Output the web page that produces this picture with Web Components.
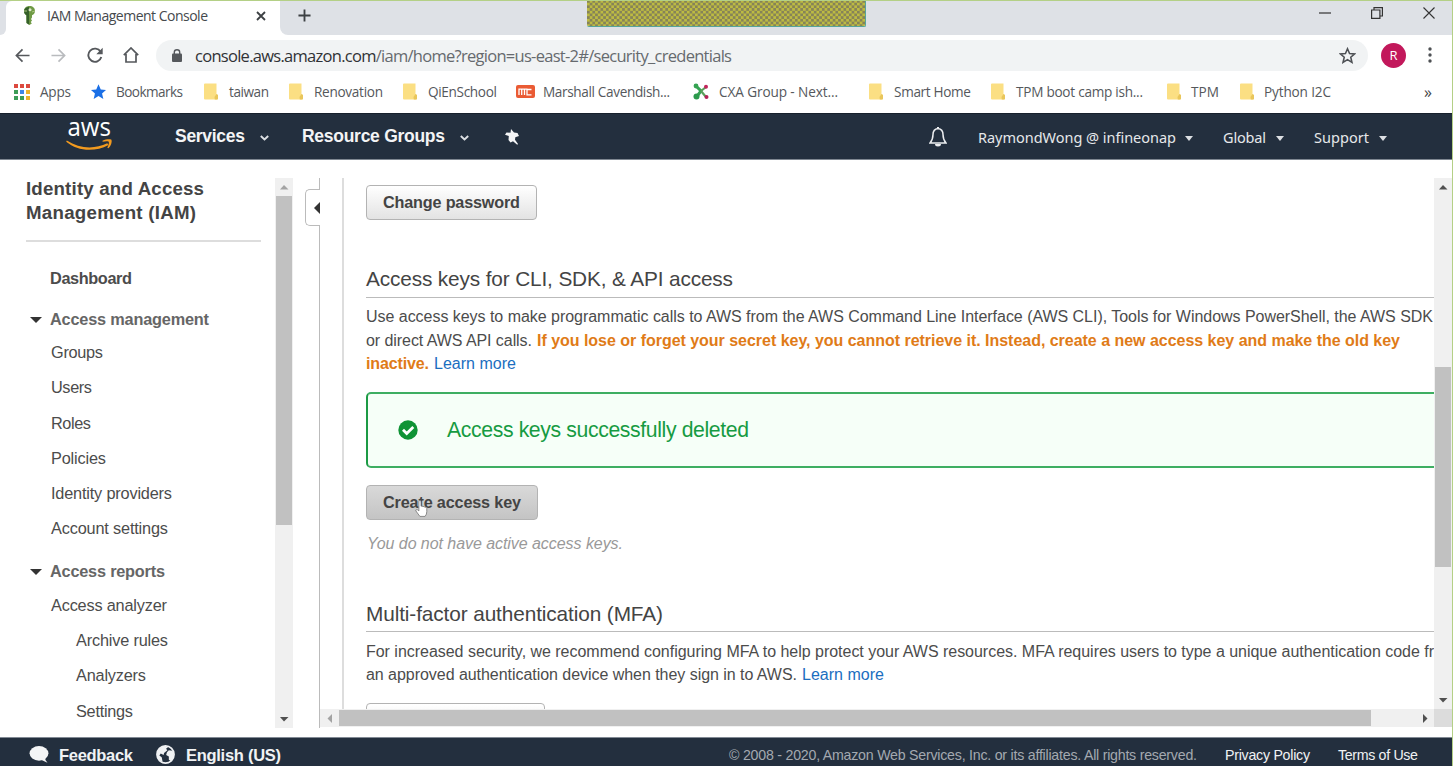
<!DOCTYPE html>
<html lang="en">
<head>
<meta charset="utf-8">
<title>IAM Management Console</title>
<style>
html,body{margin:0;height:100%;overflow:hidden;background:#fff}
body{font-family:"Liberation Sans",Arial,sans-serif}
</style>
</head>
<body>
<iam-window></iam-window>
<script>
const icons = {
  key:'<svg viewBox="0 0 13 19"><path d="M6.500 0C3 0 1 2.200 1 5c0 2 1 3.300 2.300 4.200L3.500 17l3 2 2.300-1.500-1-1.500 1.200-1.500-1-1.500 1-1.500L9 9.200C11 8.300 12 6.800 12 5c0-3-2.200-5-5.500-5z" fill="#6f9a45"/><path d="M6 1C3 1 1 3 1 5.200 1 7 2 8.600 3.500 9.200V17l2.700 1.800z" fill="#35602a"/><circle cx="7" cy="3.700" r="1.500" fill="#dfe8cf"/><path d="M1 5h3M9 6l3-1" stroke="#a8c47e"/></svg>',
  close:'<svg viewBox="0 0 10 10"><path d="M1 1l8 8M9 1L1 9" stroke="#3c4043" stroke-width="1.800"/></svg>',
  plus:'<svg viewBox="0 0 14 14"><path d="M7 .5v13M.5 7h13" stroke="#3c4043" stroke-width="2"/></svg>',
  min:'<svg viewBox="0 0 12 12"><path d="M0 6h12" stroke="#333" stroke-width="1.200"/></svg>',
  restore:'<svg viewBox="0 0 12 12"><path d="M.6 3h8.300v8.400H.6zM3 3V.7h8.400V9H9" fill="none" stroke="#333" stroke-width="1.200"/></svg>',
  x:'<svg viewBox="0 0 12 12"><path d="M.5.5l11 11M11.500.5l-11 11" stroke="#333" stroke-width="1.100"/></svg>',
  back:'<svg viewBox="0 0 16 16"><path d="M15.500 8H1.500M8 1.500L1.500 8 8 14.500" fill="none" stroke="#55585c" stroke-width="1.800"/></svg>',
  fwd:'<svg viewBox="0 0 16 16"><path d="M.5 8h14M8 1.500L14.500 8 8 14.500" fill="none" stroke="#b9bbbe" stroke-width="1.800"/></svg>',
  reload:'<svg viewBox="0 0 16 16"><path d="M13.600 4.800A6.600 6.600 0 1 0 14.300 10" fill="none" stroke="#55585c" stroke-width="1.900"/><path d="M15.700.8v6.400H9.300z" fill="#55585c"/></svg>',
  home:'<svg viewBox="0 0 16 16"><path d="M.8 8.200L8 1l7.200 7.200M3 7v8h10V7" fill="none" stroke="#55585c" stroke-width="1.700"/></svg>',
  lock:'<svg viewBox="0 0 10 13"><rect y="4.500" width="10" height="8.500" rx="1" fill="#55585c"/><path d="M2.300 5V3.200a2.700 2.400 0 0 1 5.400 0V5" fill="none" stroke="#55585c" stroke-width="1.400"/></svg>',
  star:'<svg viewBox="0 0 24 24"><path d="M12 2.500l2.900 6.700 7.200.6-5.500 4.700 1.700 7.100L12 17.800l-6.300 3.800 1.700-7.100L1.900 9.800l7.200-.6z" fill="none" stroke="#4d5054" stroke-width="2.200"/></svg>',
  dots:'<svg viewBox="0 0 4 16"><circle cx="2" cy="2" r="1.700" fill="#4d5054"/><circle cx="2" cy="8" r="1.700" fill="#4d5054"/><circle cx="2" cy="14" r="1.700" fill="#4d5054"/></svg>',
  apps:'<svg viewBox="0 0 16 16"><path d="M0 0h4v4H0zM6 0h4v4H6zM12 0h4v4h-4z" fill="#dc4a3f"/><path d="M0 6h4v4H0zM0 12h4v4H0z" fill="#3c9c56"/><path d="M6 6h4v4H6z" fill="#3f86e8"/><path d="M12 6h4v4h-4zM12 12h4v4h-4z" fill="#eeb32b"/><path d="M6 12h4v4H6z" fill="#3c9c56"/></svg>',
  bstar:'<svg viewBox="1 1 22 21"><path d="M12 1l3.300 7.500 8 .7-6.100 5.300 1.900 7.900L12 18.200l-7.100 4.200 1.900-7.900L.7 9.200l8-.7z" fill="#1a6fe6"/></svg>',
  folder:'<svg viewBox="0 0 14 17"><path d="M0 1.500Q0 .5 1 .5h11.500v10.700l1.500.8v3.500q0 1-1 1H1q-1 0-1-1z" fill="#fbdf83"/><path d="M12.500 11l-2 3 .3 2.500H13q1 0 1-1V12z" fill="#e9c65b"/></svg>',
  mc:'<svg viewBox="0 0 19 13"><rect width="19" height="13" rx="2" fill="#ea5b34"/><path d="M3 10V4.200h5.500V10M5.700 4.500V10M15.500 4.500H11v5.300h4.500M8.500 4.200h3" fill="none" stroke="#fff" stroke-width="1.300"/></svg>',
  cxa:'<svg viewBox="0 0 16 17"><path d="M2.500 2.500L8 8l-4.500 6" fill="none" stroke="#35a352" stroke-width="3"/><path d="M8 8l5-4M8 8l5 6" stroke="#5a9f5c" stroke-width="2.200"/><circle cx="3" cy="3" r="2.400" fill="#35a352"/><circle cx="3.500" cy="13.500" r="3" fill="#2c9a4d"/><circle cx="13" cy="3.700" r="2" fill="#c2265c"/><circle cx="13.500" cy="14" r="2" fill="#b42058"/></svg>',
  chev:'<svg viewBox="0 0 9 6"><path d="M.8 1l3.700 3.500L8.200 1" fill="none" stroke="#dcdfe3" stroke-width="1.900"/></svg>',
  caret:'<svg viewBox="0 0 8 5"><path d="M0 0h8L4 5z" fill="#dcdfe3"/></svg>',
  pin:'<svg viewBox="0 0 14 16"><path d="M6 0l3 3.500 3.500.5 1.500 3-3.700 1.200-.3 2.600L13 15l-.8.8L8 12.200l-2.500 1.300-2-2.500L3.800 7 0 5.800 1.500 3.500l4 .2z" fill="#f4f5f6"/></svg>',
  bell:'<svg viewBox="0 0 18 20"><path d="M9 1.500C5.700 2 4 4.200 4 7.500c0 4-.8 6-3 8.500h16c-2.200-2.500-3-4.500-3-8.500 0-3.300-1.700-5.500-5-6z" fill="none" stroke="#eceef0" stroke-width="1.500"/><path d="M8 0h2v2H8zM6 17h6a3 2.500 0 0 1-6 0z" fill="#eceef0"/></svg>',
  aws:'<svg viewBox="0 0 48 32" style="overflow:visible"><text x="1.500" y="16" font-family="Open Sans,Noto Sans,sans-serif" font-size="26" font-weight="500" fill="#fff" textLength="43.500" lengthAdjust="spacingAndGlyphs">aws</text><path d="M.8 20.500c13 8.500 28 8.800 40.500 2.800l1.200 1.700C28.500 32.500 11.500 31.200.2 21.800z" fill="#f29a1f"/><path d="M36.500 20.800c3.500-1.700 7.200-1.900 9-1.100.7 2.700-.5 6-3 8.500l-1.200-.5c1.300-2.400 1.900-4.600 1.500-6-1.300-.6-4-.4-6.200.1z" fill="#f29a1f"/></svg>',
  down:'<svg viewBox="0 0 12 6"><path d="M0 0h12L6 6z" fill="#333"/></svg>',
  collapse:'<svg viewBox="0 0 6 12"><path d="M6 0v12L0 6z" fill="#333"/></svg>',
  check:'<svg viewBox="0 0 20 20"><circle cx="10" cy="10" r="9.700" fill="#0f9335"/><path d="M5 9.800l3.700 3.700 6.600-6.600" fill="none" stroke="#fff" stroke-width="2.800"/></svg>',
  hand:'<svg viewBox="0 0 14 19"><path d="M4.200 10V2.200q0-1.400 1.100-1.400t1.200 1.400V7q1.200-.7 2 .4 1.400-.6 2 .6 2-.4 2.200 1.300v3.500q0 3-1.800 5.200H5.300L1 12.200q-.7-1.400.8-1.600 1 0 2.400 1.500z" fill="#fff" stroke="#777" stroke-width=".9"/></svg>',
  bubble:'<svg viewBox="0 0 20 18"><ellipse cx="10" cy="7.800" rx="10" ry="7.800" fill="#f4f5f6"/><path d="M11 14l8 3.800q-3-2.800-2.500-6z" fill="#f4f5f6"/></svg>',
  globe:'<svg viewBox="0 0 20 20"><circle cx="10" cy="10" r="9" fill="#232f3e" stroke="#f0f2f4" stroke-width="1.800"/><path d="M2 6q3-5 8-5l2.500 1.500-2 1.500 1.500 1.500-3.500 3-.5 2-3-1.500L3.500 11 6 13l1 5q-5-2-6-7zM13.500 5.500l4 .5q1.700 3 1 6.500L16 17l-2.500-1.500V12l-2.800-1.500.8-3z" fill="#f0f2f4"/></svg>'
};
const def = (name, css, html) => customElements.define(name, class extends HTMLElement {
  constructor(){ super(); this.attachShadow({mode:'open'}).innerHTML = `<style>${css}</style>${html}`; }
});

def('iam-window', `
:host{display:flex;flex-direction:column;width:1453px;height:766px;box-sizing:border-box;border-top:1px solid #b4d086;border-right:1px solid #b4d086;background:#fff;position:relative;overflow:hidden}
.share{position:absolute;left:587px;top:-1px;border-right:1px solid #58a59a;border-bottom:1px solid #58a59a;border-radius:0 0 2px 2px;box-sizing:border-box;width:279px;height:27px;overflow:hidden}
.share svg{display:block}
`, `<tab-strip></tab-strip><address-bar></address-bar><bookmark-bar></bookmark-bar><aws-nav></aws-nav><iam-body></iam-body><aws-footer></aws-footer><div class="share"><svg width="279" height="27"><pattern id="p" width="5.400" height="5.400" patternUnits="userSpaceOnUse"><rect width="5.400" height="5.400" fill="#bdbb42"/><rect width="2.700" height="2.700" fill="#868358"/><rect x="2.700" y="2.700" width="2.700" height="2.700" fill="#868358"/></pattern><rect width="279" height="27" fill="url(#p)"/></svg></div>`);

def('tab-strip', `
:host{display:flex;height:34px;background:#dee1e6;font-family:"Open Sans","Noto Sans",sans-serif;font-size:14px;color:#45494d}
.edge{width:6px;background:#fff}.edge i{display:block;height:34px;background:#dee1e6;border-radius:0 0 6px 0}
.tab{display:flex;align-items:center;width:274px;background:#fff;border-radius:6px 0 0 0;padding-bottom:5px;box-sizing:border-box;height:34px}
.rest{flex:1;display:flex;background:#fff}.rest div{flex:1;display:flex;align-items:center;background:#dee1e6;border-radius:0 0 0 8px;padding-bottom:5px;box-sizing:border-box}
.tail{margin-bottom:5px;display:flex}
`, `<div class="edge"><i></i></div><div class="tab"><ui-icon n="key" w="13" h="19" g="17"></ui-icon><fit-text w="161" g="11">IAM Management Console</fit-text><ui-icon n="close" w="10" h="10" g="48"></ui-icon></div>
<div class="rest"><div><ui-icon n="plus" w="13" h="13" g="18"></ui-icon><span class="tail"><ui-icon n="min" w="12" h="12" g="1008"></ui-icon><ui-icon n="restore" w="12" h="12" g="40"></ui-icon><ui-icon n="x" w="12" h="12" g="40"></ui-icon></span></div></div>`);

def('address-bar', `
:host{display:flex;align-items:center;height:41px;font-family:"Open Sans","Noto Sans",sans-serif}
.box{display:flex;align-items:center;width:1212px;height:31px;padding-top:1px;box-sizing:border-box;border-radius:16px;background:#f1f3f4;margin-left:17px;font-size:16.500px;color:#666a6e}
b{font-weight:400;color:#303236}
.av{width:25px;height:25px;border-radius:50%;background:#c2185b;color:#fff;display:flex;justify-content:center;align-items:center;font-size:13px;margin-left:13px}
`, `<ui-icon n="back" w="15" h="15" g="15"></ui-icon><ui-icon n="fwd" w="15" h="15" g="21"></ui-icon><ui-icon n="reload" w="16" h="16" g="21"></ui-icon><ui-icon n="home" w="16" h="16" g="20"></ui-icon>
<div class="box"><ui-icon n="lock" w="10" h="13" g="16"></ui-icon><fit-text w="537" g="13"><b>console.aws.amazon.com</b>/iam/home?region=us-east-2#/security_credentials</fit-text><ui-icon n="star" w="17" h="17" g="607"></ui-icon></div>
<div class="av">R</div><ui-icon n="dots" w="4" h="16" g="22"></ui-icon>`);

def('bookmark-bar', `
:host{display:flex;align-items:center;height:37px;padding-bottom:5px;box-sizing:border-box;font-family:"Open Sans","Noto Sans",sans-serif;font-size:13.600px;color:#55585c}
`, `<ui-icon n="apps" w="16" h="16" g="14"></ui-icon><fit-text w="31" g="10">Apps</fit-text>
<ui-icon n="bstar" w="15" h="15" g="20"></ui-icon><fit-text w="67" g="10">Bookmarks</fit-text>
<ui-icon n="folder" w="14" h="17" g="21"></ui-icon><fit-text w="40" g="11">taiwan</fit-text>
<ui-icon n="folder" w="14" h="17" g="20"></ui-icon><fit-text w="69" g="11">Renovation</fit-text>
<ui-icon n="folder" w="14" h="17" g="20"></ui-icon><fit-text w="69" g="11">QiEnSchool</fit-text>
<ui-icon n="mc" w="19" h="13" g="19"></ui-icon><fit-text w="127" g="8">Marshall Cavendish...</fit-text>
<ui-icon n="cxa" w="16" h="17" g="23"></ui-icon><fit-text w="119" g="10">CXA Group - Next...</fit-text>
<ui-icon n="folder" w="14" h="17" g="31"></ui-icon><fit-text w="77" g="11">Smart Home</fit-text>
<ui-icon n="folder" w="14" h="17" g="20"></ui-icon><fit-text w="127" g="11">TPM boot camp ish...</fit-text>
<ui-icon n="folder" w="14" h="17" g="24"></ui-icon><fit-text w="28" g="10">TPM</fit-text>
<ui-icon n="folder" w="14" h="17" g="21"></ui-icon><fit-text w="67" g="10">Python I2C</fit-text>
<fit-text w="9" g="93" s="16" c="#444">»</fit-text>`);

def('aws-nav', `
:host{display:flex;align-items:center;height:47px;padding-bottom:1px;background:#232f3e;border-top:1px solid #17202c;border-bottom:1px solid #7f8791;box-sizing:border-box;color:#f3f4f5;font-size:17.500px;font-weight:700}
.r{display:flex;align-items:center;font:400 14.500px "Noto Sans",sans-serif;color:#e6e8ea;padding-top:3px}
`, `<ui-icon n="aws" w="48" h="32" g="66"></ui-icon><fit-text w="70" g="61">Services</fit-text><ui-icon n="chev" w="9" h="6" g="15" t="4"></ui-icon><fit-text w="143" g="33">Resource Groups</fit-text><ui-icon n="chev" w="9" h="6" g="15" t="4"></ui-icon><ui-icon n="pin" w="14" h="16" g="36" t="2"></ui-icon>
<div class="r"><ui-icon n="bell" w="18" h="20" g="410"></ui-icon><fit-text w="198" g="31">RaymondWong @ infineonap</fit-text><ui-icon n="caret" w="8" h="5" g="9" t="2"></ui-icon><fit-text w="43" g="30">Global</fit-text><ui-icon n="caret" w="8" h="5" g="10" t="2"></ui-icon><fit-text w="55" g="30">Support</fit-text><ui-icon n="caret" w="8" h="5" g="10" t="2"></ui-icon></div>`);

def('iam-body', `
:host{display:flex;height:578px;background:#fff}
.track{margin-top:18px;display:flex}
`, `<iam-sidebar></iam-sidebar><div class="track"><scroll-bar style="width:18px;height:550px" start="18" size="329" off="up"></scroll-bar></div><iam-splitter></iam-splitter><iam-main></iam-main>`);

def('iam-sidebar', `
:host{display:block;width:275px;color:#444;font-size:16px}
h1{margin:17px 0 0 26px;width:235px;height:63px;border-bottom:2px solid #ddd;font-size:18.700px;line-height:24px;font-weight:700;color:#444;display:flex;flex-direction:column}
h1 fit-text{line-height:24px}
nav{display:flex;flex-direction:column}
nav>*{height:35.300px}
`, `<h1><fit-text w="178">Identity and Access</fit-text><fit-text w="170">Management (IAM)</fit-text></h1>
<nav>
<side-row style="height:40px;margin-top:16px;font-weight:700" g="50" w="82">Dashboard</side-row>
<side-row style="height:40px;margin-top:1px;font-weight:700;color:#666" arrow g="8" w="159">Access management</side-row>
<side-row style="margin-top:-4.500px" g="51" w="52">Groups</side-row>
<side-row g="51" w="41">Users</side-row>
<side-row g="51" w="40">Roles</side-row>
<side-row g="51" w="55">Policies</side-row>
<side-row g="51" w="121">Identity providers</side-row>
<side-row g="51" w="117">Account settings</side-row>
<side-row style="height:40px;margin-top:4.500px;font-weight:700;color:#666" arrow g="8" w="115">Access reports</side-row>
<side-row style="margin-top:-3.500px" g="51" w="116">Access analyzer</side-row>
<side-row g="76" w="92">Archive rules</side-row>
<side-row g="76" w="70">Analyzers</side-row>
<side-row g="76" w="57">Settings</side-row>
</nav>`);

customElements.define('side-row', class extends HTMLElement {
  constructor(){ super(); const a = n => this.getAttribute(n);
    this.attachShadow({mode:'open'}).innerHTML = `<style>:host{display:flex;align-items:center;font-size:16.300px;color:#4c4c4c}</style>${this.hasAttribute('arrow')?'<ui-icon n="down" w="12" h="6" g="30" t="2"></ui-icon>':''}<fit-text g="${a('g')}" w="${a('w')}">${this.textContent}</fit-text>`; }
});

customElements.define('scroll-bar', class extends HTMLElement {
  constructor(){ super(); const a = n => this.getAttribute(n), h = this.hasAttribute('h'), off = a('off');
    const tri = (d,c) => `<svg width="10" height="10" viewBox="0 0 10 10"><path d="${d}" fill="${c}"/></svg>`;
    this.attachShadow({mode:'open'}).innerHTML = `<style>:host{display:flex;flex-direction:${h?'row':'column'};background:#f0f0f0;box-sizing:border-box}
.b{flex:none;display:flex;align-items:center;justify-content:center;${h?'width:19px':'height:18px'}}
.m{flex:1;display:flex;flex-direction:inherit}.t{flex:none;background:#c1c1c1;${h?`margin:1px 0 1px ${a('start')-19}px;width:${a('size')}px`:`margin:${a('start')-18}px 1px 0 1px;height:${a('size')}px`}}</style>
<div class="b">${h?tri('M7 1v9L2.500 5.500z','#a3a3a3'):tri('M1 7.500h8.500L5 3z',off?'#a3a3a3':'#505050')}</div><div class="m"><div class="t"></div></div><div class="b">${h?tri('M3 1v9l4.500-4.500z','#505050'):tri('M1 3h8.500L5 7.500z','#505050')}</div>`; }
});

def('iam-splitter', `
:host{display:flex;flex-direction:column;width:27px;margin-top:18px;height:550px}
.l{align-self:flex-end;border-right:1px solid #bbb;height:11px}
.h{margin-left:12px;height:37px;box-sizing:border-box;border:1px solid #bbb;border-right:0;border-radius:5px 0 0 5px;display:flex;align-items:center;justify-content:flex-end}
.f{flex:1}
`, `<div class="l"></div><div class="h"><ui-icon n="collapse" w="6" h="12" t="2"></ui-icon></div><div class="l f"></div>`);

def('iam-main', `
:host{display:grid;grid-template-columns:1114px 18px;grid-template-rows:531px 18px;margin-top:18px}
.corner{background:#dcdcdc}
`, `<credentials-view></credentials-view><scroll-bar start="189" size="200"></scroll-bar><scroll-bar h start="19" size="1032"></scroll-bar><div class="corner"></div>`);

def('credentials-view', `
:host{display:block;overflow:hidden;height:531px;margin-left:22px;border-left:2px solid #ddd;padding-left:22px;box-sizing:border-box;color:#4c4c4c;font-size:16px}
h2{margin:0;font-weight:400;font-size:20.800px;color:#444;border-bottom:1px solid #bbb;height:32px;display:flex;align-items:center;padding-bottom:4px;box-sizing:border-box}
p{margin:0;display:grid;grid-auto-rows:23.700px}
p>span{display:flex;align-items:center}
b{color:#e07b17}.lk{color:#1b6ebf}
em{display:flex;color:#999}
.alert{display:flex;align-items:center;height:76px;box-sizing:border-box;border:2px solid #3eae62;border-left-color:#1c9a45;border-right:0;border-radius:5px 0 0 5px;background:#f6fff8;color:#169b42;font-size:21.200px;margin-top:15.400px}
`, `<ui-button w="137" style="margin-top:7px;width:171px">Change password</ui-button>
<h2 style="margin-top:46px"><fit-text w="367">Access keys for CLI, SDK, &amp; API access</fit-text></h2>
<p style="margin-top:7.400px"><span><fit-text w="1067">Use access keys to make programmatic calls to AWS from the AWS Command Line Interface (AWS CLI), Tools for Windows PowerShell, the AWS SDK</fit-text></span>
<span><fit-text w="166">or direct AWS API calls.</fit-text><b><fit-text w="863" g="5">If you lose or forget your secret key, you cannot retrieve it. Instead, create a new access key and make the old key</fit-text></b></span>
<span><b><fit-text w="63">inactive.</fit-text></b><fit-text w="82" g="5" class="lk">Learn more</fit-text></span></p>
<div class="alert"><ui-icon n="check" w="20" h="20" g="30"></ui-icon><fit-text w="302" g="29">Access keys successfully deleted</fit-text></div>
<ui-button w="138" hot style="margin-top:17px;width:172px">Create access key</ui-button>
<em style="margin-top:14px"><fit-text w="256" g="1">You do not have active access keys.</fit-text></em>
<h2 style="margin-top:46.600px"><fit-text w="297">Multi-factor authentication (MFA)</fit-text></h2>
<p style="margin-top:7.400px"><span><fit-text w="1068">For increased security, we recommend configuring MFA to help protect your AWS resources. MFA requires users to type a unique authentication code fr</fit-text></span>
<span><fit-text w="431">an approved authentication device when they sign in to AWS.</fit-text><fit-text w="82" g="5" class="lk">Learn more</fit-text></span></p>
<ui-button w="0" style="margin-top:16px;width:179px"></ui-button>`);

customElements.define('ui-button', class extends HTMLElement {
  constructor(){ super(); const hot = this.hasAttribute('hot');
    this.attachShadow({mode:'open'}).innerHTML = `<style>:host{display:flex;align-items:center;height:35px;box-sizing:border-box;border:1px solid #b3b3b3;border-radius:4px;background:${hot?'linear-gradient(#d9d9d9,#c4c4c4)':'linear-gradient(#fff,#e3e3e3)'};font-weight:700;color:#444;font-size:16.200px;position:relative}
.c{position:absolute;left:48px;top:13px}</style><fit-text g="16" w="${this.getAttribute('w')}">${this.textContent}</fit-text>${hot?'<div class="c"><ui-icon n="hand" w="13" h="19"></ui-icon></div>':''}`; }
});

def('aws-footer', `
:host{display:flex;align-items:center;height:29px;padding-top:5px;box-sizing:border-box;background:#232f3e;border-top:1px solid #828a94;color:#f0f2f4;font-size:16.500px;font-weight:700}
.r{display:flex;font-weight:400;font-size:14.200px}
`, `<ui-icon n="bubble" w="20" h="17" g="29"></ui-icon><fit-text w="74" g="10">Feedback</fit-text><ui-icon n="globe" w="19" h="19" g="23"></ui-icon><fit-text w="95" g="11">English (US)</fit-text>
<div class="r"><fit-text w="468" g="448" c="#a3a9b0">© 2008 - 2020, Amazon Web Services, Inc. or its affiliates. All rights reserved.</fit-text><fit-text w="85" g="28">Privacy Policy</fit-text><fit-text w="80" g="28">Terms of Use</fit-text></div>`);

customElements.define('ui-icon', class extends HTMLElement {
  constructor(){ super(); const a = n => this.getAttribute(n);
    this.attachShadow({mode:'open'}).innerHTML = `<style>:host{display:block;flex:none;width:${a('w')}px;height:${a('h')}px;margin-left:${a('g')||0}px;padding-top:${a('t')||0}px}svg{display:block;width:100%;height:${a('h')}px}</style>${icons[a('n')]}`; }
});

/* A single line of text whose letter spacing is adjusted to fill the width in w. */
customElements.define('fit-text', class extends HTMLElement {
  connectedCallback(){
    if (this.shadowRoot) return;
    const w = +this.getAttribute('w'), g = this.getAttribute('g')||0, s = this.getAttribute('s'), c = this.getAttribute('c');
    this.attachShadow({mode:'open'}).innerHTML = `<style>:host{display:block;flex:none;width:${w}px;margin-left:${g}px;white-space:nowrap;line-height:20px;${s?`font-size:${s}px;`:''}${c?`color:${c};`:''}}span{display:inline-block}</style><span><slot></slot></span>`;
    const span = this.shadowRoot.querySelector('span'), n = this.textContent.length;
    if (n > 1) span.style.letterSpacing = (w - span.getBoundingClientRect().width) / (n - 1) + 'px';
  }
});
</script>
</body>
</html>
